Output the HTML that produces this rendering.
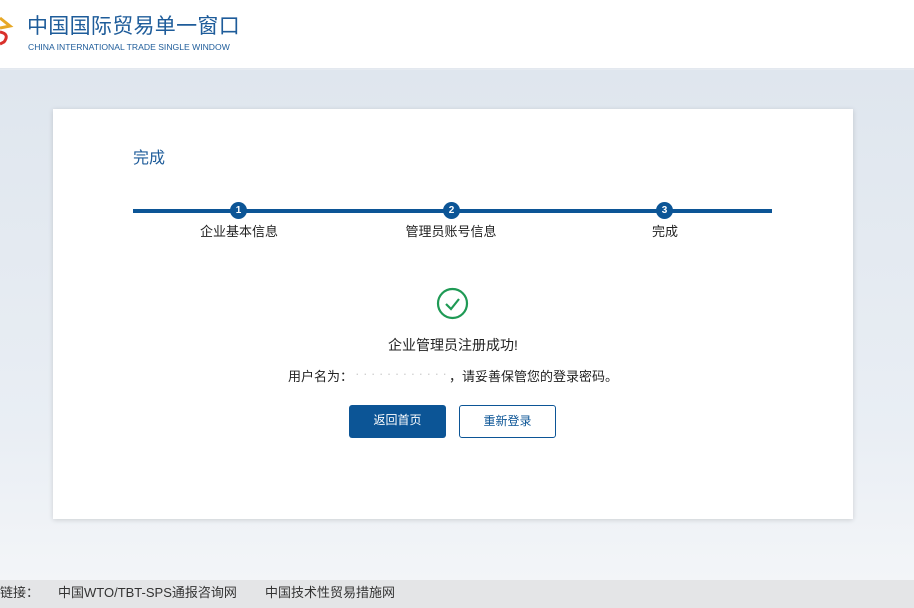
<!DOCTYPE html>
<html><head><meta charset="utf-8"><style>
*{margin:0;padding:0;box-sizing:border-box}
body{width:914px;height:608px;overflow:hidden;font-family:"Liberation Sans","Noto Sans CJK SC",sans-serif;background:#e6ebf1;position:relative}
.hdr{position:absolute;left:0;top:0;width:914px;height:69px;background:#fff;border-bottom:1px solid #e3e8ef}
.t1{position:absolute;left:27px;top:10px;font-size:21px;color:#1e5c9a;letter-spacing:0.3px}
.t2{position:absolute;left:28px;top:42px;font-size:8.6px;color:#1e5c9a}
.bg{position:absolute;left:0;top:70px;width:914px;height:510px;background:linear-gradient(180deg,#dfe6ee,#e9eef4 70%,#f3f5f8)}
.card{position:absolute;left:53px;top:109px;width:800px;height:410px;background:#fff;box-shadow:0 1px 5px rgba(0,0,0,.15)}
.ttl{position:absolute;left:80px;top:35px;font-size:16px;color:#1e5c9a}
.line{position:absolute;left:80px;top:100px;width:639px;height:4px;background:#0c5596}
.dot{position:absolute;top:93px;width:17px;height:17px;border-radius:50%;background:#0c5596;color:#fff;font-size:10px;font-weight:bold;text-align:center;line-height:17px}
.lbl{position:absolute;top:112px;font-size:13px;color:#222;width:160px;text-align:center}
.msg{position:absolute;left:0;width:800px;text-align:center;color:#222}
.btn{position:absolute;top:296px;width:97px;height:33px;border-radius:3px;font-size:12px;text-align:center;line-height:31px}
.foot{position:absolute;left:0;top:580px;width:914px;height:28px;background:#e4e5e7;font-size:13px;color:#333;line-height:26px}
</style></head><body>
<div class="hdr">
<svg style="position:absolute;left:0;top:14px" width="14" height="36" viewBox="0 0 14 36"><path d="M0 4 L10 12 L0 14" fill="none" stroke="#e7a825" stroke-width="3"/><path d="M0 18 Q10 20 4 28 L0 30" fill="none" stroke="#d9302b" stroke-width="3"/></svg>
<div class="t1">中国国际贸易单一窗口</div>
<div class="t2">CHINA INTERNATIONAL TRADE SINGLE WINDOW</div>
</div>
<div class="bg"></div>
<div class="card">
<div class="ttl">完成</div>
<div class="line"></div>
<div class="dot" style="left:177px">1</div>
<div class="dot" style="left:390px">2</div>
<div class="dot" style="left:603px">3</div>
<div class="lbl" style="left:106px">企业基本信息</div>
<div class="lbl" style="left:318px">管理员账号信息</div>
<div class="lbl" style="left:532px">完成</div>
<svg style="position:absolute;left:383px;top:178px" width="33" height="33" viewBox="0 0 33 33"><circle cx="16.5" cy="16.5" r="14.5" fill="none" stroke="#1f9a55" stroke-width="2.2"/><path d="M10 17 L15 22 L23 12" fill="none" stroke="#1f9a55" stroke-width="2.2"/></svg>
<div class="msg" style="top:226px;font-size:14px">企业管理员注册成功!</div>
<div class="msg" style="top:257px;font-size:13px">用户名为：<span style="display:inline-block;width:96px;color:#ccc;overflow:hidden;white-space:nowrap;vertical-align:top">· · · · · · · · · · · ·</span>，请妥善保管您的登录密码。</div>
<div class="btn" style="left:296px;background:#0c5596;color:#fff">返回首页</div>
<div class="btn" style="left:406px;border:1px solid #0c5596;color:#0c5596;background:#fff">重新登录</div>
</div>
<div class="foot"><span style="position:absolute;left:0">链接：</span><span style="position:absolute;left:58px">中国WTO/TBT-SPS通报咨询网</span><span style="position:absolute;left:265px">中国技术性贸易措施网</span></div>
</body></html>
